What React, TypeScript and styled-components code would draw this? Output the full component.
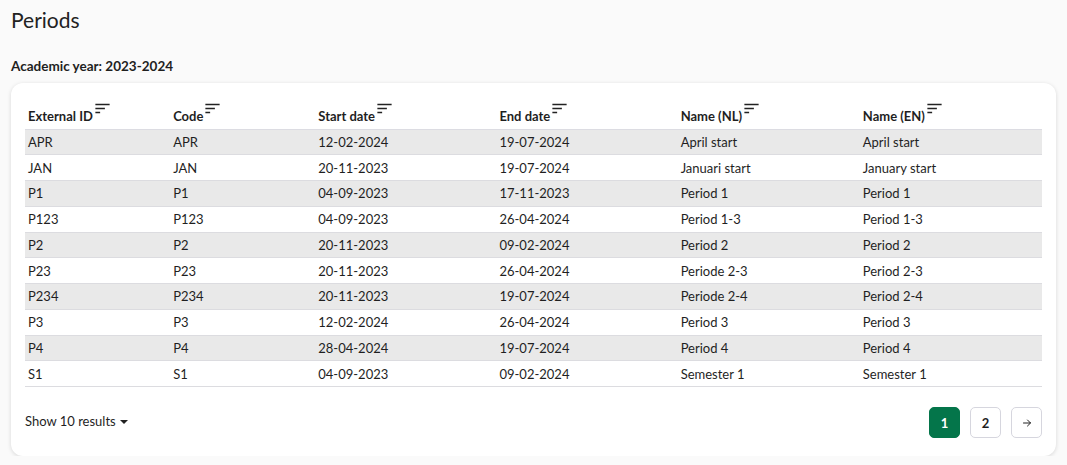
import React from "react";
import styled, { createGlobalStyle } from "styled-components";

const Global = createGlobalStyle`
  html, body { margin: 0; padding: 0; background: #fafafa; }
  body { font-family: Lato, "Noto Sans", sans-serif; color: #1f1f1f; }
`;

const Page = styled.div`
  padding: 7px 11px 0 11px;
`;

const Title = styled.h1`
  margin: 0;
  font-size: 21px;
  font-weight: 400;
  line-height: 26px;
  color: #222;
`;

const Subtitle = styled.div`
  margin-top: 25px;
  font-size: 13.5px;
  font-weight: 700;
  line-height: 16px;
`;

const Card = styled.div`
  margin-top: 9px;
  background: #fff;
  border-radius: 12px;
  box-shadow: 0 1px 4px rgba(0, 0, 0, 0.14);
  padding: 14px 14px 18px 14px;
`;

const Table = styled.table`
  width: 100%;
  border-collapse: collapse;
  table-layout: fixed;
  font-size: 13px;
`;

const Th = styled.th`
  text-align: left;
  vertical-align: bottom;
  font-weight: 700;
  height: 32px;
  padding: 0 3px 5px 3px;
  box-sizing: border-box;
  border-bottom: 1px solid #dcdce2;
  white-space: nowrap;
`;

const SortIcon = styled.svg`
  width: 19px;
  height: 19px;
  vertical-align: -3px;
  margin-left: 0;
  position: relative;
  top: -6px;
`;

const Tr = styled.tr<{ $striped: boolean }>`
  background: ${(p) => (p.$striped ? "#e9e9e9" : "#fff")};
`;

const Td = styled.td`
  height: 24.75px;
  padding: 0 3px;
  border-bottom: 1px solid #dcdce0;
  white-space: nowrap;
`;

const Footer = styled.div`
  margin-top: 20px;
  display: flex;
  justify-content: space-between;
  align-items: center;
`;

const ShowResults = styled.div`
  font-size: 13px;
  display: flex;
  align-items: center;
  gap: 4px;
  padding-bottom: 3px;
`;

const Caret = styled.span`
  width: 0;
  height: 0;
  border-left: 4px solid transparent;
  border-right: 4px solid transparent;
  border-top: 4px solid #222;
  margin-top: 1px;
`;

const Pager = styled.div`
  display: flex;
  gap: 10px;
`;

const PageButton = styled.button<{ $active?: boolean }>`
  width: 31px;
  height: 31px;
  box-sizing: border-box;
  border-radius: 5px;
  border: 1px solid ${(p) => (p.$active ? "#04754a" : "#d6d6de")};
  background: ${(p) => (p.$active ? "#04754a" : "#fff")};
  color: ${(p) => (p.$active ? "#fff" : "#1f1f1f")};
  font-family: inherit;
  font-size: 13px;
  font-weight: 700;
  padding: 0;
  display: flex;
  align-items: center;
  justify-content: center;
`;

const columns = ["External ID", "Code", "Start date", "End date", "Name (NL)", "Name (EN)"];
const widths = [145, 145, 181, 181, 182, 182];

const rows = [
  ["APR", "APR", "12-02-2024", "19-07-2024", "April start", "April start"],
  ["JAN", "JAN", "20-11-2023", "19-07-2024", "Januari start", "January start"],
  ["P1", "P1", "04-09-2023", "17-11-2023", "Period 1", "Period 1"],
  ["P123", "P123", "04-09-2023", "26-04-2024", "Period 1-3", "Period 1-3"],
  ["P2", "P2", "20-11-2023", "09-02-2024", "Period 2", "Period 2"],
  ["P23", "P23", "20-11-2023", "26-04-2024", "Periode 2-3", "Period 2-3"],
  ["P234", "P234", "20-11-2023", "19-07-2024", "Periode 2-4", "Period 2-4"],
  ["P3", "P3", "12-02-2024", "26-04-2024", "Period 3", "Period 3"],
  ["P4", "P4", "28-04-2024", "19-07-2024", "Period 4", "Period 4"],
  ["S1", "S1", "04-09-2023", "09-02-2024", "Semester 1", "Semester 1"],
];

const Sort = () => (
  <SortIcon viewBox="0 0 24 24" fill="#222">
    <path d="M3 18h6v-2H3v2zM3 6v2h18V6H3zm0 7h12v-2H3v2z" />
  </SortIcon>
);

export default function App() {
  return (
    <>
      <Global />
      <Page>
        <Title>Periods</Title>
        <Subtitle>Academic year: 2023-2024</Subtitle>
        <Card>
          <Table>
            <colgroup>
              {widths.map((w, i) => (
                <col key={i} style={{ width: w }} />
              ))}
            </colgroup>
            <thead>
              <tr>
                {columns.map((c) => (
                  <Th key={c}>
                    {c}
                    <Sort />
                  </Th>
                ))}
              </tr>
            </thead>
            <tbody>
              {rows.map((r, i) => (
                <Tr key={r[0]} $striped={i % 2 === 0}>
                  {r.map((v, j) => (
                    <Td key={j}>{v}</Td>
                  ))}
                </Tr>
              ))}
            </tbody>
          </Table>
          <Footer>
            <ShowResults>
              Show 10 results <Caret />
            </ShowResults>
            <Pager>
              <PageButton $active>1</PageButton>
              <PageButton>2</PageButton>
              <PageButton aria-label="next">
                <svg width="12" height="12" viewBox="0 0 24 24" fill="none" stroke="#222" strokeWidth="2" strokeLinecap="round" strokeLinejoin="round">
                  <path d="M5 12h14M13 6l6 6-6 6" />
                </svg>
              </PageButton>
            </Pager>
          </Footer>
        </Card>
      </Page>
    </>
  );
}
